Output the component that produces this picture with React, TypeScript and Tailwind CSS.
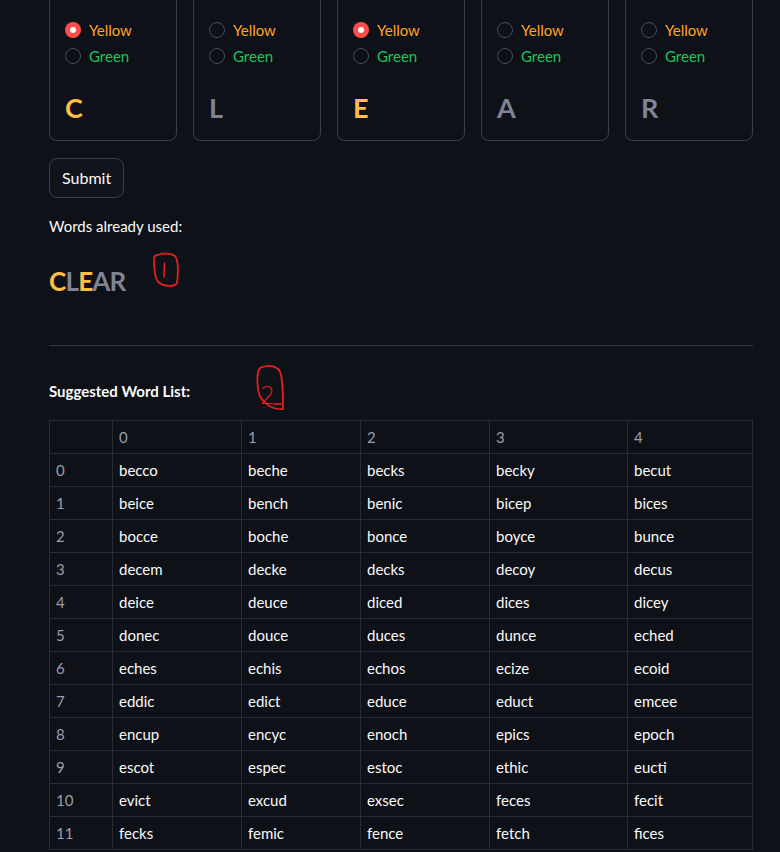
import React from "react";

const FONT = { fontFamily: "Lato, 'Noto Sans', sans-serif" };

const letters = [
  { ch: "C", pick: "yellow" },
  { ch: "L", pick: null },
  { ch: "E", pick: "yellow" },
  { ch: "A", pick: null },
  { ch: "R", pick: null },
];

const words = [
  ["becco", "beche", "becks", "becky", "becut"],
  ["beice", "bench", "benic", "bicep", "bices"],
  ["bocce", "boche", "bonce", "boyce", "bunce"],
  ["decem", "decke", "decks", "decoy", "decus"],
  ["deice", "deuce", "diced", "dices", "dicey"],
  ["donec", "douce", "duces", "dunce", "eched"],
  ["eches", "echis", "echos", "ecize", "ecoid"],
  ["eddic", "edict", "educe", "educt", "emcee"],
  ["encup", "encyc", "enoch", "epics", "epoch"],
  ["escot", "espec", "estoc", "ethic", "eucti"],
  ["evict", "excud", "exsec", "feces", "fecit"],
  ["fecks", "femic", "fence", "fetch", "fices"],
];

const colWidths = ["w-[63px]", "w-[129px]", "w-[119px]", "w-[129px]", "w-[138px]", "w-[125px]"];

const Radio = ({ checked, label, color }: { checked: boolean; label: string; color: string }) => (
  <div className="flex items-center h-[26px]">
    {checked ? (
      <div className="w-4 h-4 rounded-full bg-[#ff4b4b] flex items-center justify-center">
        <div className="w-[6px] h-[6px] rounded-full bg-white" />
      </div>
    ) : (
      <div className="w-4 h-4 rounded-full border border-[#4a4e59] bg-[#0e1117]" />
    )}
    <span className={`ml-2 text-[15px] ${color}`}>{label}</span>
  </div>
);

const LetterCard = ({ ch, pick }: { ch: string; pick: string | null }) => (
  <div className="w-[128px] border border-t-0 border-[#3a3d46] rounded-b-lg pt-[17px] pb-[16px] px-[15px]">
    <Radio checked={pick === "yellow"} label="Yellow" color="text-[#ffa421]" />
    <Radio checked={pick === "green"} label="Green" color="text-[#21c354]" />
    <div
      className={`mt-[23px] h-[32px] leading-[32px] text-[27px] font-bold ${
        pick ? "text-[#ffbd45]" : "text-[#808495]"
      }`}
    >
      {ch}
    </div>
  </div>
);

export default function App() {
  return (
    <div className="min-h-screen bg-[#0e1117] text-[#fafafa] overflow-hidden" style={FONT}>
      <div className="ml-[49px] w-[704px]">
        <div className="flex gap-4">
          {letters.map((l) => (
            <LetterCard key={l.ch} ch={l.ch} pick={l.pick} />
          ))}
        </div>

        <button className="mt-[17px] h-[40px] px-[12px] w-[75px] rounded-lg border border-[#3d4049] bg-[#11141a] text-[16px] text-[#fafafa]">
          Submit
        </button>

        <div className="mt-[17px] text-[15px] leading-[22px]">Words already used:</div>

        <div className="relative mt-[26px] h-[36px] leading-[36px] text-[26px] font-bold tracking-[-0.8px]">
          <span className="text-[#ffbd45]">C</span>
          <span className="text-[#808495]">L</span>
          <span className="text-[#ffbd45]">E</span>
          <span className="text-[#808495]">AR</span>
          <svg className="absolute left-[103px] top-[-11px]" width="28" height="36" viewBox="0 0 28 36">
            <path
              d="M6 3 C10 1 19 1 23 4 C27 9 26 24 25 31 C23 35 12 35 6 30 C2 25 2 12 2 7 C2 4 4 3 6 3"
              fill="none"
              stroke="#e0201c"
              strokeWidth="1.8"
              strokeLinecap="round"
            />
            <line x1="12.5" y1="11" x2="12" y2="25" stroke="#e0201c" strokeWidth="1.6" strokeLinecap="round" />
          </svg>
        </div>

        <div className="mt-[46px] h-px bg-[#31333f]" />

        <div className="relative mt-[35px] text-[15px] font-bold leading-[20px]">
          Suggested Word List:
          <svg className="absolute left-[206px] top-[-17px]" width="34" height="50" viewBox="0 0 34 50">
            <path
              d="M8 3 C14 1 20 2 24 6 C28 11 28 30 28 45 C20 46 12 42 6 34 C2 28 2 14 3 8 C4 4 6 3 8 3"
              fill="none"
              stroke="#e0201c"
              strokeWidth="1.8"
              strokeLinecap="round"
            />
            <text
              x="5"
              y="40"
              fontSize="24"
              fill="#e0201c"
              fontFamily="'DejaVu Sans', sans-serif"
              fontWeight="300"
            >
              2
            </text>
            <path d="M19 40 L28 40" stroke="#e0201c" strokeWidth="1.6" fill="none" />
          </svg>
        </div>

        <table className="mt-[19px] border-collapse text-[15px]">
          <thead>
            <tr className="h-[33px]">
              {["", "0", "1", "2", "3", "4"].map((h, i) => (
                <th
                  key={i}
                  className={`${colWidths[i]} border border-[#2b2d35] px-[6px] pt-[1px] text-left font-normal text-[#9a9ead]`}
                >
                  {h}
                </th>
              ))}
            </tr>
          </thead>
          <tbody>
            {words.map((row, r) => (
              <tr key={r} className="h-[33px]">
                <td className="border border-[#2b2d35] px-[6px] pt-[1px] text-[#9a9ead]">{r}</td>
                {row.map((w) => (
                  <td key={w} className="border border-[#2b2d35] px-[6px] pt-[1px]">
                    {w}
                  </td>
                ))}
              </tr>
            ))}
          </tbody>
        </table>
      </div>
    </div>
  );
}
